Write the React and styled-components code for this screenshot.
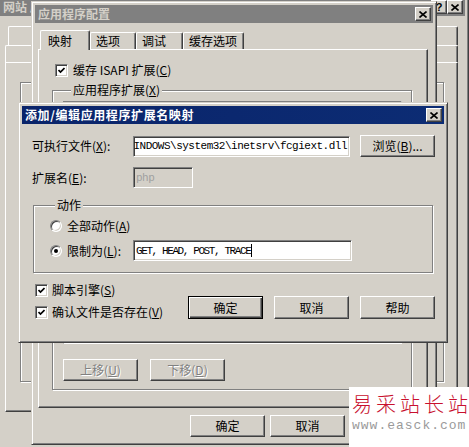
import React from 'react';
import styled, { createGlobalStyle, css } from 'styled-components';

const GlobalStyle = createGlobalStyle`
  html, body {
    margin: 0;
    padding: 0;
    background: #d4d0c8;
    overflow: hidden;
  }
  body {
    font-family: "Noto Sans CJK SC", "DejaVu Sans", sans-serif;
    font-size: 12px;
    color: #000;
  }
`;

// win2000 bevels
const raised = css`
  border: 1px solid;
  border-color: #fff #404040 #404040 #fff;
  box-shadow: inset -1px -1px 0 #808080;
`;
const frame = css`
  border: 1px solid;
  border-color: #d4d0c8 #404040 #404040 #d4d0c8;
  box-shadow: inset 1px 1px 0 #fff, inset -1px -1px 0 #808080;
`;
const sunken = css`
  border: 1px solid;
  border-color: #808080 #fff #fff #808080;
  box-shadow: inset 1px 1px 0 #404040, inset -1px -1px 0 #d4d0c8;
`;
const etched = css`
  border: 1px solid #808080;
  box-shadow: inset 1px 1px 0 #fff, 1px 1px 0 #fff;
`;

const Desktop = styled.div`
  position: relative;
  width: 469px;
  height: 447px;
  overflow: hidden;
  background: #d4d0c8;
`;

/* windows sit on the desktop at their own place */
const Window = styled.div`
  position: absolute;
  left: ${(p) => p.$x}px;
  top: ${(p) => p.$y}px;
  width: ${(p) => p.$w}px;
  height: ${(p) => p.$h}px;
  box-sizing: border-box;
  padding: 3px;
  background: #d4d0c8;
  display: flex;
  flex-direction: column;
  ${frame};
`;

const Caption = styled.div`
  flex: none;
  height: 18px;
  display: flex;
  align-items: center;
  padding: 0 2px 0 3px;
  background: ${(p) => (p.$active ? 'linear-gradient(90deg, #0a246a, #0c2c74)' : '#808080')};
  color: ${(p) => (p.$active ? '#fff' : '#d4d0c8')};
  font-weight: bold;
  font-size: 12px;
  line-height: 16px;
  white-space: nowrap;
`;

const CaptionText = styled.span`
  flex: 1;
  letter-spacing: ${(p) => p.$ls || 0}px;
`;

const CapButton = styled.div`
  flex: none;
  width: 16px;
  height: 14px;
  box-sizing: border-box;
  background: #d4d0c8;
  color: #000;
  display: flex;
  align-items: center;
  justify-content: center;
  font: bold 11px "Liberation Sans", sans-serif;
  ${raised};
`;

const CloseGlyph = () => (
  <svg width="8" height="7" viewBox="0 0 8 7">
    <path d="M0.5 0.5 L7.5 6.5 M7.5 0.5 L0.5 6.5" stroke="#000" strokeWidth="1.6" fill="none" />
  </svg>
);

/* ---------- background window (网站 属性) ---------- */

const BgBody = styled.div`
  flex: 1;
  display: flex;
  flex-direction: column;
  padding: 10px 7px 0 5px;
`;

const BgTabRow = styled.div`
  display: flex;
  height: ${(p) => p.$h}px;
  padding-left: ${(p) => p.$indent}px;
`;

const BgTab = styled.div`
  width: ${(p) => p.$w}px;
  box-sizing: border-box;
  border-top: 1px solid #fff;
  border-left: 1px solid #fff;
  border-right: 1px solid #404040;
  box-shadow: inset -1px 0 0 #808080;
  border-radius: 2px 2px 0 0;
`;

const BgPanel = styled.div`
  height: 350px;
  box-sizing: border-box;
  padding: 19px 13px 0 14px;
  border: 1px solid;
  border-color: #fff #404040 #404040 #fff;
  box-shadow: inset -1px -1px 0 #808080;
`;

const BgGroup = styled.div`
  height: 298px;
  ${etched};
`;

/* ---------- config window (应用程序配置) ---------- */

const ConfigBody = styled.div`
  flex: 1;
  display: flex;
  flex-direction: column;
  padding: 7px 5px 0 3px;
`;

const TabStrip = styled.div`
  display: flex;
  align-items: flex-end;
  height: 19px;
  padding-left: 2px;
`;

const Tab = styled.div`
  position: relative;
  z-index: ${(p) => (p.$active ? 2 : 0)};
  width: ${(p) => p.$w}px;
  height: ${(p) => (p.$active ? 20 : 17)}px;
  margin-bottom: ${(p) => (p.$active ? -1 : 0)}px;
  box-sizing: border-box;
  padding-left: ${(p) => (p.$active ? 7 : 5)}px;
  display: flex;
  align-items: center;
  background: #d4d0c8;
  border-top: 1px solid #fff;
  border-left: 1px solid #fff;
  border-right: 1px solid #404040;
  box-shadow: inset -1px 0 0 #808080;
  border-radius: 2px 2px 0 0;
  line-height: 14px;
  white-space: nowrap;
`;

const TabPanel = styled.div`
  flex: none;
  height: 359px;
  box-sizing: border-box;
  display: flex;
  flex-direction: column;
  padding: 13px 15px 0 13px;
  border: 1px solid;
  border-color: #fff #404040 #404040 #fff;
  box-shadow: inset -1px -1px 0 #808080;
`;

const Group = styled.fieldset`
  margin: ${(p) => p.$m || '0'};
  padding: ${(p) => p.$pad};
  min-width: 0;
  ${etched};
  display: flex;
  flex-direction: column;
`;

const Legend = styled.legend`
  position: relative;
  margin-left: ${(p) => p.$ml || 6}px;
  padding: 0 2px;
  background: #d4d0c8;
  line-height: 14px;
  white-space: nowrap;
`;

const ListBox = styled.div`
  height: 243px;
  box-sizing: border-box;
  background: #fff;
  ${sunken};
`;

const ButtonRow = styled.div`
  display: flex;
  gap: ${(p) => p.$gap || 0}px;
  justify-content: ${(p) => p.$justify || 'flex-start'};
  margin-top: ${(p) => p.$mt || 0}px;
  padding-left: ${(p) => p.$pl || 0}px;
`;

const Button = styled.button`
  flex: none;
  width: ${(p) => p.$w || 75}px;
  height: ${(p) => p.$h || 23}px;
  box-sizing: border-box;
  padding: 0;
  background: #d4d0c8;
  font: 12px "Noto Sans CJK SC", sans-serif;
  line-height: 14px;
  color: #000;
  ${raised};
  ${(p) =>
    p.$default &&
    css`
      border: 1px solid #000;
      box-shadow: inset 1px 1px 0 #fff, inset -1px -1px 0 #404040, inset -2px -2px 0 #808080;
    `}
  ${(p) =>
    p.disabled &&
    css`
      color: #808080;
      text-shadow: 1px 1px 0 #fff;
    `}
`;

/* ---------- shared form bits ---------- */

const Row = styled.div`
  display: flex;
  align-items: center;
  margin-top: ${(p) => p.$mt || 0}px;
  margin-left: ${(p) => p.$ml || 0}px;
`;

const Label = styled.span`
  flex: none;
  width: ${(p) => (p.$w ? `${p.$w}px` : 'auto')};
  line-height: 14px;
  white-space: nowrap;
`;

const Field = styled.div`
  flex: none;
  width: ${(p) => p.$w}px;
  height: 21px;
  box-sizing: border-box;
  padding: 0 2px;
  display: flex;
  align-items: center;
  justify-content: ${(p) => (p.$end ? 'flex-end' : 'flex-start')};
  overflow: hidden;
  white-space: nowrap;
  background: ${(p) => (p.$disabled ? '#d4d0c8' : '#fff')};
  color: ${(p) => (p.$disabled ? '#a0a0a0' : '#000')};
  font: 11px "Liberation Mono", monospace;
  letter-spacing: ${(p) => p.$ls ?? -0.5}px;
  ${sunken};
`;

const Caret = styled.span`
  display: inline-block;
  width: 1px;
  height: 13px;
  margin-left: 1px;
  background: #000;
`;

const Box = styled.span`
  flex: none;
  width: 13px;
  height: 13px;
  box-sizing: border-box;
  background: #fff;
  display: flex;
  align-items: center;
  justify-content: center;
  margin-right: ${(p) => p.$gap || 4}px;
  ${sunken};
`;

const Radio = styled.span`
  flex: none;
  width: 12px;
  height: 12px;
  box-sizing: border-box;
  border-radius: 50%;
  border: 1px solid;
  border-color: #808080 #fff #fff #808080;
  box-shadow: inset 1px 1px 0 #404040, inset -1px -1px 0 #d4d0c8;
  background: #fff;
  display: flex;
  align-items: center;
  justify-content: center;
  margin-right: 5px;

  &::after {
    content: '';
    display: ${(p) => (p.$on ? 'block' : 'none')};
    width: 4px;
    height: 4px;
    border-radius: 50%;
    background: #000;
  }
`;

const Check = ({ gap }) => (
  <Box $gap={gap}>
    <svg width="7" height="7" viewBox="0 0 7 7">
      <path d="M0.5 3 L2.5 5 L6.5 1" stroke="#000" strokeWidth="1.7" fill="none" />
    </svg>
  </Box>
);

/* ---------- front dialog ---------- */

const DialogBody = styled.div`
  flex: 1;
  display: flex;
  flex-direction: column;
  padding: 11px 9px 0 10px;
`;

const Footer = styled.div`
  display: flex;
  justify-content: space-between;
  align-items: flex-end;
  margin-top: 10px;
`;

const Checks = styled.div`
  display: flex;
  flex-direction: column;
  gap: 8px;
  padding-left: 3px;
`;

/* ---------- watermark overlay ---------- */

const Watermark = styled.div`
  position: absolute;
  left: 349px;
  top: 387px;
  width: 120px;
  height: 60px;
  background: #fff;
  box-sizing: border-box;
  padding: 5px 0 0 3px;
  overflow: hidden;
  white-space: nowrap;
`;

const MarkTitle = styled.div`
  color: #c8102e;
  font: 300 20px "Noto Sans CJK SC", sans-serif;
  letter-spacing: 4px;
  line-height: 24px;
`;

const MarkUrl = styled.div`
  margin-top: 3px;
  color: #9a9a9a;
  font: 13px "Liberation Mono", monospace;
  letter-spacing: 1px;
  line-height: 14px;
`;

export default function App() {
  return (
    <>
      <GlobalStyle />
      <Desktop>
        <Window $x={-4} $y={-6} $w={473} $h={470}>
          <Caption>
            <CaptionText>网站 属性</CaptionText>
            <CapButton>?</CapButton>
            <CapButton>
              <CloseGlyph />
            </CapButton>
          </Caption>
          <BgBody>
            <BgTabRow $h={19} $indent={3}>
              {[80, 70, 90, 86, 124].map((w, i) => (
                <BgTab key={i} $w={w} />
              ))}
            </BgTabRow>
            <BgTabRow $h={17} $indent={0}>
              {[70, 84, 84, 90, 125].map((w, i) => (
                <BgTab key={i} $w={w} />
              ))}
            </BgTabRow>
            <BgPanel>
              <BgGroup />
            </BgPanel>
          </BgBody>
        </Window>

        <Window $x={31} $y={1} $w={406} $h={444}>
          <Caption>
            <CaptionText>应用程序配置</CaptionText>
            <CapButton>
              <CloseGlyph />
            </CapButton>
          </Caption>
          <ConfigBody>
            <TabStrip>
              <Tab $active $w={50}>映射</Tab>
              <Tab $w={46}>选项</Tab>
              <Tab $w={47}>调试</Tab>
              <Tab $w={61}>缓存选项</Tab>
            </TabStrip>
            <TabPanel>
              <Row $ml={3}>
                <Check gap={5} />
                <Label>
                  缓存 ISAPI 扩展(<u>C</u>)
                </Label>
              </Row>
              <Group $m="6px 0 0 0" $pad="4px 9px 8px 10px">
                <Legend $ml={8}>
                  应用程序扩展(<u>X</u>)
                </Legend>
                <ListBox />
                <ButtonRow $gap={12} $mt={15}>
                  <Button disabled $h={22}>
                    上移(<u>U</u>)
                  </Button>
                  <Button disabled $h={22}>
                    下移(<u>D</u>)
                  </Button>
                </ButtonRow>
              </Group>
            </TabPanel>
            <ButtonRow $gap={5} $mt={7} $pl={152}>
              <Button $h={22}>确定</Button>
              <Button $h={22}>取消</Button>
            </ButtonRow>
          </ConfigBody>
        </Window>

        <Window $x={18} $y={102} $w={430} $h={241}>
          <Caption $active>
            <CaptionText $ls={0.6}>添加/编辑应用程序扩展名映射</CaptionText>
            <CapButton>
              <CloseGlyph />
            </CapButton>
          </Caption>
          <DialogBody>
            <Row>
              <Label $w={101}>
                可执行文件(<u>X</u>):
              </Label>
              <Field $w={217} $end>
                C:\WINDOWS\system32\inetsrv\fcgiext.dll
              </Field>
              <Button style={{ marginLeft: 10 }} $h={22}>
                浏览(<u>B</u>)...
              </Button>
            </Row>
            <Row $mt={10}>
              <Label $w={101}>
                扩展名(<u>E</u>):
              </Label>
              <Field $w={60} $disabled>
                php
              </Field>
            </Row>
            <Group $m="10px 2px 0 1px" $pad="7px 10px 11px 16px">
              <Legend $ml={5}>动作</Legend>
              <Row>
                <Radio />
                <Label>
                  全部动作(<u>A</u>)
                </Label>
              </Row>
              <Row $mt={7}>
                <Radio $on />
                <Label $w={66}>
                  限制为(<u>L</u>):
                </Label>
                <Field $w={219} $ls={-1.4}>
                  GET, HEAD, POST, TRACE
                  <Caret />
                </Field>
              </Row>
            </Group>
            <Footer>
              <Checks>
                <Row>
                  <Check />
                  <Label>
                    脚本引擎(<u>S</u>)
                  </Label>
                </Row>
                <Row>
                  <Check />
                  <Label>
                    确认文件是否存在(<u>V</u>)
                  </Label>
                </Row>
              </Checks>
              <ButtonRow $gap={11}>
                <Button $default>确定</Button>
                <Button>取消</Button>
                <Button>帮助</Button>
              </ButtonRow>
            </Footer>
          </DialogBody>
        </Window>

        <Watermark>
          <MarkTitle>易采站长站</MarkTitle>
          <MarkUrl>www.easck.com</MarkUrl>
        </Watermark>
      </Desktop>
    </>
  );
}
